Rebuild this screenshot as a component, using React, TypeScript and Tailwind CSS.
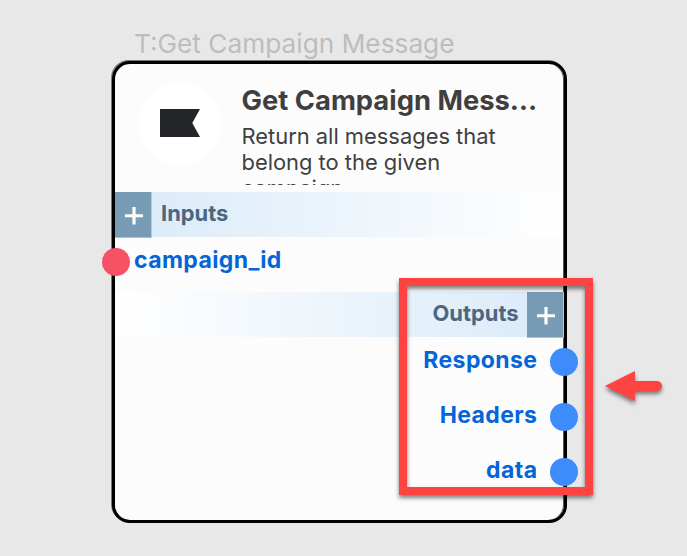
import React from 'react';

function PlusButton() {
  return (
    <button aria-label="Add" className="flex h-[46px] w-[36px] shrink-0 items-center justify-center border-b border-[#a9c0d1] bg-[#789bb6] shadow-[1px_0_0_#b4cad9]">
      <svg width="18" height="18" viewBox="0 0 18 18" className="mt-[3px] ml-[2px]">
        <path d="M9 0V17.5M0 8.75H18" stroke="#fdfdfd" strokeWidth="3.2" fill="none" />
      </svg>
    </button>
  );
}

function Output({ name }: { name: string }) {
  return (
    <div className="-mr-[14px] flex h-[55px] items-start justify-end">
      <span className="mr-[13px] text-[23px] leading-[28px] font-bold tracking-[0.4px] text-[#0465d8]">{name}</span>
      <span className="mt-[2px] size-[27.6px] rounded-full bg-[#3e8bfb]" />
    </div>
  );
}

export default function App() {
  return (
    <main className="relative h-[556px] w-[687px] overflow-hidden bg-[#e8e8e8] pt-[28px] font-['Inter',sans-serif]">
      <h1 className="ml-[134px] h-[33px] text-[26.25px] leading-[32px] whitespace-nowrap text-[#bdbdbd]">T:Get Campaign Message</h1>
      <section className="ml-[112px] flex h-[462px] w-[455px] flex-col rounded-[18px] border-[3px] border-black bg-[#fcfcfc] shadow-[-1px_-1px_0_#777,inset_-1px_0_0_#555]">
        <header className="flex h-[128px] shrink-0 pt-[19px] pl-[24px]">
          <div className="flex size-[82px] shrink-0 items-center justify-center rounded-full bg-white">
            <svg width="40" height="28" viewBox="0 0 40 28" className="-mt-0.5">
              <path d="M0 0H40L32.3 14L40 28H0Z" fill="#242528" />
            </svg>
          </div>
          <div className="ml-[20.5px] w-[310px] text-[#3f3f3f]">
            <h2 className="h-[34px] text-[27.35px] leading-[36px] font-bold whitespace-nowrap">Get Campaign Mess…</h2>
            <p className="mt-[6px] h-[62px] w-[280px] overflow-hidden text-[21.9px] leading-[26px]">
              Return all messages that belong to the given campaign
            </p>
          </div>
        </header>
        <div className="mr-px flex h-[45px] shrink-0 items-start bg-linear-to-r from-[#d9eaf8] to-white">
          <PlusButton />
          <span className="ml-[10px] text-[21.9px] leading-[43px] font-bold text-[#4c6680]">Inputs</span>
        </div>
        <div className="-ml-[13px] flex h-[55px] shrink-0 items-start pt-[9px]">
          <span className="mt-[2px] size-[28px] shrink-0 rounded-full bg-[#f65164]" />
          <span className="ml-[4px] text-[23px] leading-[28px] font-bold tracking-[0.4px] text-[#0465d8]">campaign_id</span>
        </div>
        <div className="mr-px flex h-[45px] shrink-0 items-start justify-end bg-linear-to-l from-[#d9eaf8] to-white">
          <span className="mr-[8.5px] text-[21.9px] leading-[43px] font-bold text-[#4c6680]">Outputs</span>
          <PlusButton />
        </div>
        <div className="flex flex-col pt-[9px]">
          <Output name="Response" />
          <Output name="Headers" />
          <Output name="data" />
        </div>
      </section>
      <div className="absolute top-[278px] left-[399px] h-[217px] w-[194px] border-8 border-[#fe4343] drop-shadow-[0_3px_2px_rgba(0,0,0,0.5)]" />
      <svg className="absolute top-[365px] left-[600px] drop-shadow-[0_3px_2px_rgba(0,0,0,0.5)]" width="70" height="44" viewBox="0 0 70 44">
        <path d="M5 21L35 6V16H57A5 5 0 0 1 57 26H35V36Z" fill="#fe4343" />
      </svg>
    </main>
  );
}
